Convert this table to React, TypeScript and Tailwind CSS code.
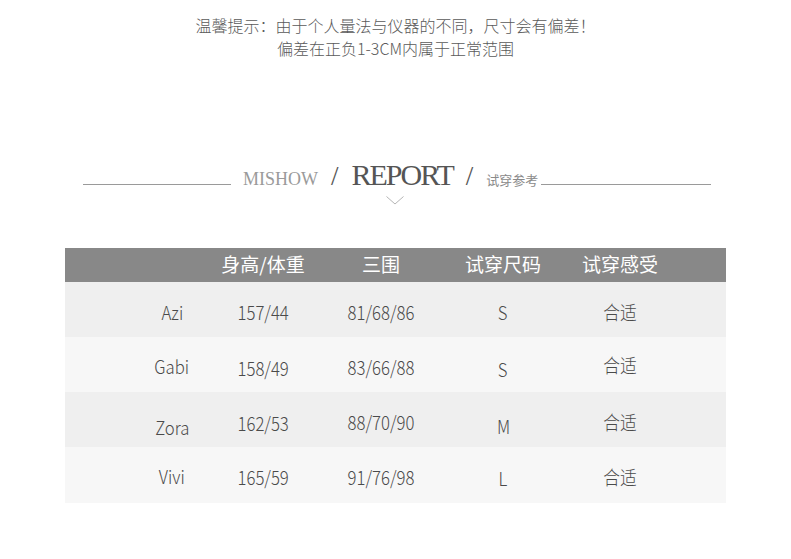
const ROWS = [
  { bg: "bg-[#efefef]", cells: [["Azi", ""], ["157/44", ""], ["81/68/86", ""], ["S", ""], ["合适", ""]] },
  { bg: "bg-[#f7f7f7]", cells: [["Gabi", "-translate-y-[1px]"], ["158/49", "translate-y-[1px]"], ["83/66/88", ""], ["S", "translate-y-[2px]"], ["合适", "-translate-y-[2px]"]] },
  { bg: "bg-[#efefef]", cells: [["Zora", "translate-y-[5px]"], ["162/53", "translate-y-[1px]"], ["88/70/90", ""], ["M", "translate-y-[4px]"], ["合适", ""]] },
  { bg: "bg-[#f7f7f7]", cells: [["Vivi", "-translate-y-[2px]"], ["165/59", "-translate-y-[1px]"], ["91/76/98", "-translate-y-[1px]"], ["L", ""], ["合适", "-translate-y-[1px]"]] },
];

const HEADS = ["身高/体重", "三围", "试穿尺码", "试穿感受"];

const cjk = "font-['Noto_Sans_CJK_SC','Noto_Sans',sans-serif]";

export default function App() {
  return (
    <div className={`w-[791px] h-[559px] bg-white ${cjk}`}>
      {/* notice */}
      <div className="pt-[14px] text-center text-[16px] leading-[23px] font-light text-[#5a5a5a]">
        <p>温馨提示：由于个人量法与仪器的不同，尺寸会有偏差！</p>
        <p>偏差在正负1-3CM内属于正常范围</p>
      </div>

      {/* title */}
      <div className="mt-[100px] ml-[83px] w-[628px] flex items-baseline">
        <span className="w-[148px] h-px bg-[#9a9a9a] mb-[2px]" />
        <span className="ml-[12px] font-['Liberation_Serif',serif] text-[18px] leading-none text-[#9a9a9a]">MISHOW</span>
        <span className="ml-[13px] font-['Liberation_Serif',serif] text-[27px] leading-none text-[#555]">/</span>
        <span className="ml-[13px] font-['Liberation_Serif',serif] text-[30px] leading-none tracking-[-2px] text-[#555]">REPORT</span>
        <span className="ml-[13px] font-['Liberation_Serif',serif] text-[27px] leading-none text-[#555]">/</span>
        <span className="ml-[13px] text-[13px] leading-none text-[#8a8a8a]">试穿参考</span>
        <span className="ml-[3px] flex-1 h-px bg-[#9a9a9a] mb-[2px]" />
      </div>
      <div className="flex justify-center pt-[6px] pr-[2px]">
        <svg width="18" height="9" viewBox="0 0 18 9" fill="none">
          <path d="M0.5 0.5 L9 8 L17.5 0.5" stroke="#b5b5b5" strokeWidth="1" />
        </svg>
      </div>

      {/* table */}
      <div className="mt-[43px] mx-[65px] w-[661px]">
        <div className="grid grid-cols-[67px_80px_102px_134px_110px_124px_1fr] h-[34px] items-center bg-[#888888] text-white text-[19px]">
          <span />
          <span />
          {HEADS.map((h) => (
            <span key={h} className="text-center leading-none -translate-y-[2px]">{h}</span>
          ))}
        </div>
        {ROWS.map((r, i) => (
          <div
            key={i}
            className={`grid grid-cols-[67px_80px_102px_134px_110px_124px_1fr] items-center ${i === 3 ? "h-[56px]" : "h-[55px]"} ${r.bg} text-[#4a4a4a] font-light text-[19px]`}
          >
            <span />
            {r.cells.map(([t, off], j) => (
              <span key={j} className={`flex justify-center pt-[4px] ${off}`}>
                <span className="inline-block scale-x-[0.88] leading-none">{t}</span>
              </span>
            ))}
          </div>
        ))}
      </div>
    </div>
  );
}
